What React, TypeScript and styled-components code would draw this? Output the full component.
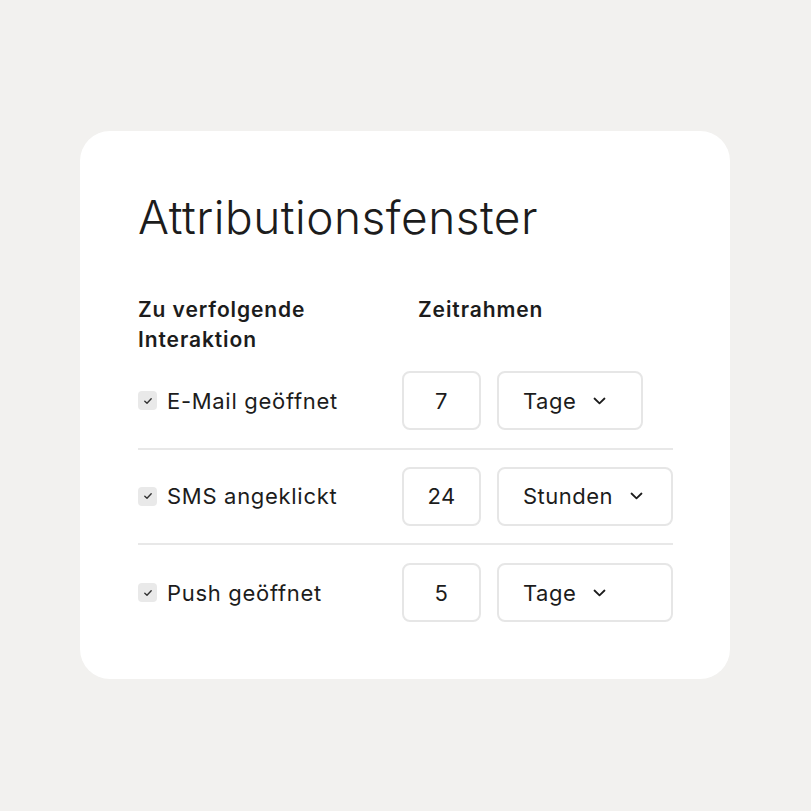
import styled, { createGlobalStyle } from "styled-components";

const GlobalStyle = createGlobalStyle`
  html, body {
    margin: 0;
    padding: 0;
    background: #f2f1ef;
  }
  body {
    font-family: Inter, "Noto Sans", sans-serif;
    color: #1c1c1c;
  }
`;

const Page = styled.div`
  width: 811px;
  height: 811px;
  padding: 131px 0 0 80px;
  box-sizing: border-box;
`;

const Card = styled.div`
  width: 650px;
  height: 548px;
  box-sizing: border-box;
  background: #fff;
  border-radius: 30px;
  padding: 58px 57px 0 58px;
`;

const Title = styled.h1`
  margin: 0;
  font-size: 46px;
  font-weight: 300;
  letter-spacing: 0.5px;
  line-height: 56px;
`;

const HeaderRow = styled.div`
  display: flex;
  margin-top: 50px;
  margin-bottom: -1px;
`;

const HeaderCell = styled.div<{ $width?: number; $indent?: number }>`
  width: ${(p) => (p.$width ? `${p.$width}px` : "auto")};
  padding-left: ${(p) => p.$indent ?? 0}px;
  font-size: 21px;
  font-weight: 600;
  letter-spacing: 0.9px;
  line-height: 30px;
`;

const Row = styled.div<{ $last?: boolean }>`
  display: flex;
  align-items: center;
  height: 95.5px;
  border-bottom: ${(p) => (p.$last ? "none" : "2px solid #e8e8e8")};
  box-sizing: border-box;
`;

const Label = styled.label`
  width: 264px;
  display: flex;
  align-items: center;
  gap: 10px;
  font-size: 22px;
  letter-spacing: 0.7px;
`;

const Check = styled.span`
  width: 19px;
  height: 19px;
  border-radius: 4px;
  background: #e9e9e9;
  display: flex;
  align-items: center;
  justify-content: center;
`;

const NumberBox = styled.div`
  width: 79px;
  height: 59px;
  box-sizing: border-box;
  border: 2px solid #e6e6e6;
  border-radius: 8px;
  display: flex;
  align-items: center;
  justify-content: center;
  font-size: 22px;
  letter-spacing: 0.4px;
`;

const Select = styled.div<{ $width: number }>`
  width: ${(p) => p.$width}px;
  height: 59px;
  margin-left: 16px;
  box-sizing: border-box;
  border: 2px solid #e6e6e6;
  border-radius: 8px;
  display: flex;
  align-items: center;
  gap: 17px;
  padding-left: 24px;
  font-size: 22px;
  letter-spacing: 0.5px;
`;

const Chevron = () => (
  <svg width="13" height="8" viewBox="0 0 13 8" fill="none">
    <path d="M1.5 1.5L6.5 6.3L11.5 1.5" stroke="#1c1c1c" strokeWidth="1.8" strokeLinecap="round" strokeLinejoin="round" />
  </svg>
);

const Tick = () => (
  <svg width="10" height="8" viewBox="0 0 10 8" fill="none">
    <path d="M1.8 4.2L4 6.2L8.2 1.8" stroke="#333" strokeWidth="1.4" strokeLinecap="round" strokeLinejoin="round" />
  </svg>
);

const rows = [
  { label: "E-Mail geöffnet", value: "7", unit: "Tage", width: 146 },
  { label: "SMS angeklickt", value: "24", unit: "Stunden", width: 176 },
  { label: "Push geöffnet", value: "5", unit: "Tage", width: 176 },
];

export default function App() {
  return (
    <>
      <GlobalStyle />
      <Page>
        <Card>
          <Title>Attributionsfenster</Title>
          <HeaderRow>
            <HeaderCell $width={264}>
              Zu verfolgende
              <br />
              Interaktion
            </HeaderCell>
            <HeaderCell $indent={16}>Zeitrahmen</HeaderCell>
          </HeaderRow>
          {rows.map((r, i) => (
            <Row key={r.label} $last={i === rows.length - 1}>
              <Label>
                <Check>
                  <Tick />
                </Check>
                {r.label}
              </Label>
              <NumberBox>{r.value}</NumberBox>
              <Select $width={r.width}>
                {r.unit}
                <Chevron />
              </Select>
            </Row>
          ))}
        </Card>
      </Page>
    </>
  );
}
